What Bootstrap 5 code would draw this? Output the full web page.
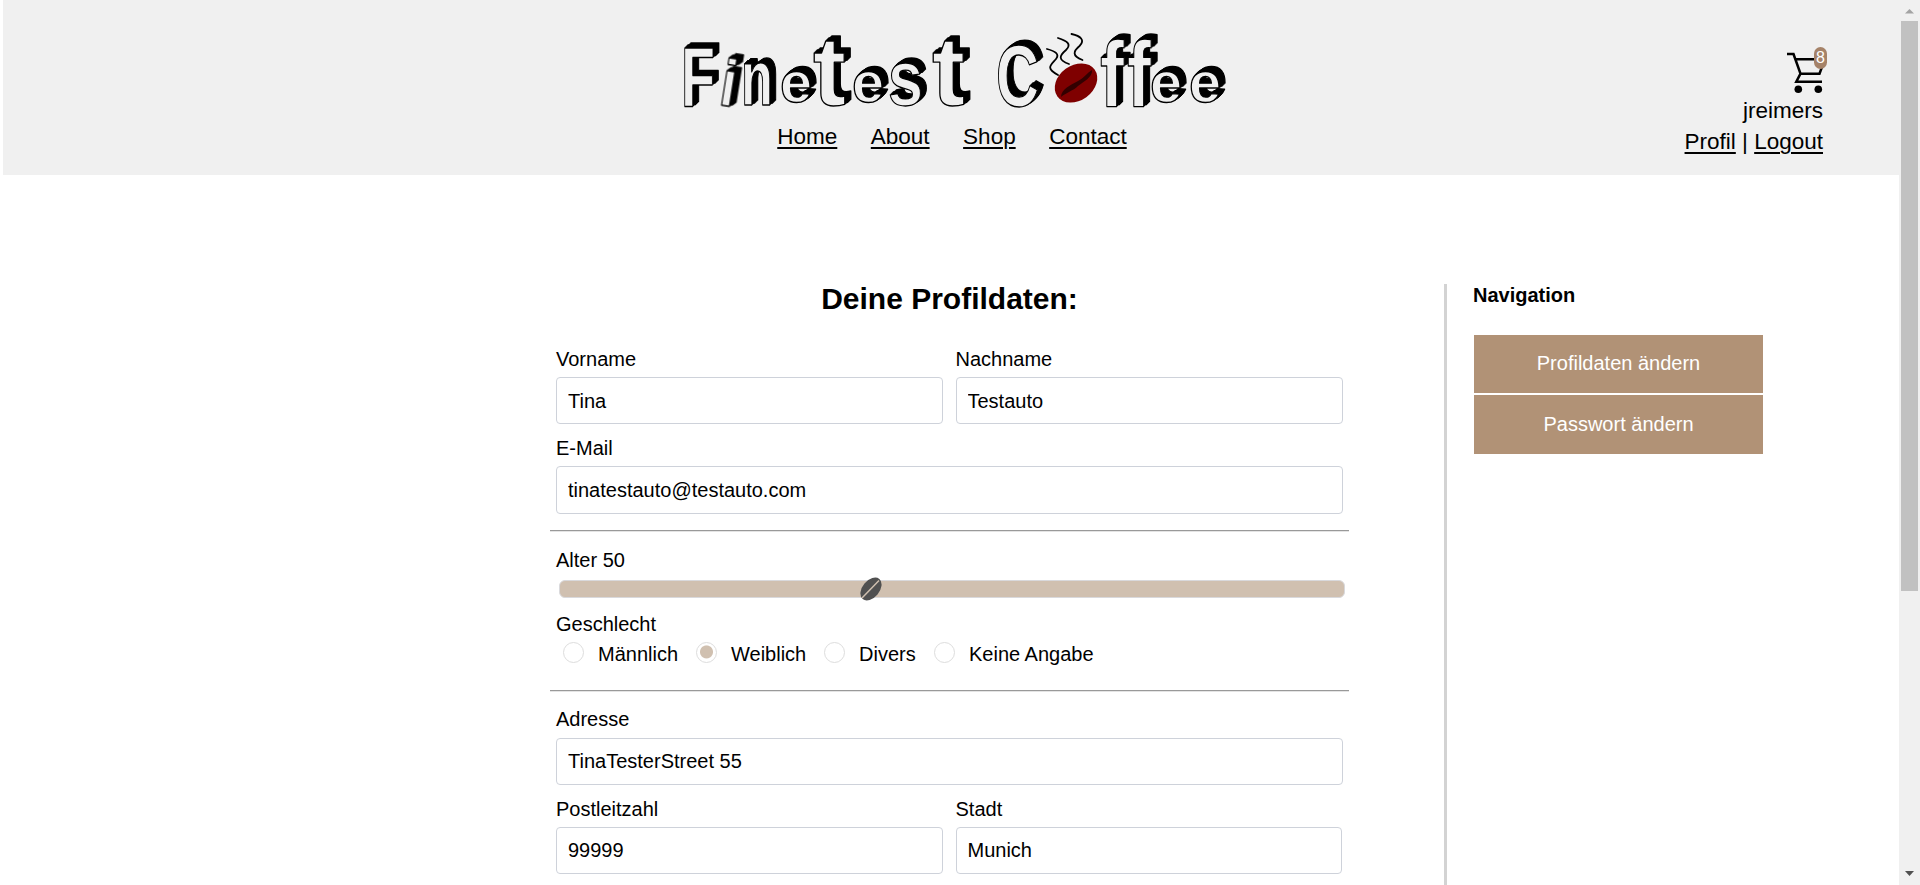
<!DOCTYPE html>
<html lang="de">
<head>
<meta charset="utf-8">
<meta name="viewport" content="width=device-width, initial-scale=1">
<title>Finetest Coffee</title>
<link href="https://cdn.jsdelivr.net/npm/bootstrap@5.3.0/dist/css/bootstrap.min.css" rel="stylesheet">
<style>
body{font-family:"Liberation Sans",Arial,sans-serif;font-size:20px;line-height:24px;color:#000;height:885px;overflow:hidden;background:#fff}
a{color:#000}
.viewport{width:1899px;height:885px;overflow:hidden;padding-left:3px}
.site-head{height:175px;background:#f0f0f0;font-size:22.5px;line-height:31px;display:grid;grid-template-columns:1fr 560px 1fr}
.brand-col{padding-top:24px;position:relative;left:2px}
.logo{display:block;width:560px;height:96px;overflow:visible}
.logo text{fill:#f0f0f0;stroke:#000;stroke-width:1.3px;stroke-linejoin:round;font-family:"Liberation Sans",Arial,sans-serif;font-weight:700;filter:drop-shadow(1px -1px 0 #000) drop-shadow(2px -2px 0 #000) drop-shadow(3px -2px 0 #000)}
.main-links{gap:33.5px;margin:1px 2px 0 0}
.main-links a,.account a{text-decoration-thickness:2px;text-underline-offset:3px}
.account{padding:46px 76px 0 0}
.cart{width:40px;height:49px;margin-right:-4px;position:relative}
.cart-count{position:absolute;left:27px;top:1px;width:13px;height:22px;border-radius:6.5px;background:#a58268;color:#fff;font-size:16px;line-height:22px;text-align:center}
.content{padding-left:547px;padding-top:109px}
.profile{width:799px}
.profile h1{font-size:30px;line-height:34px;font-weight:700;margin:-2px 0 31px}
.field{padding:0 6px 12px}
.field label{display:block;margin-bottom:6px}
.field .form-control{height:47.4px;padding:1px 11px 0;font-size:20px;line-height:24px;color:#000;border-color:#ced2da;border-radius:4px}
.field.col-6:nth-child(odd),.field.col-6.zip{padding-right:7px}
.rule{height:2px;background:linear-gradient(#999 50%,#e4e4e4 50%)}
.track{height:18px;margin:0 -2px 0 3px;border:1px solid #d9d9dc;border-radius:6px;background:#d0c0b0;position:relative}
.bean-thumb{position:absolute;top:-4px;width:24px;height:24px}
.gender{height:24px;margin-top:6px}
.gender .form-check-input{width:21px;height:21px;margin:0 14px 2px 0;border:1px solid #ddd;background-color:#fff;float:none}
.gender .form-check-input:checked{background-image:radial-gradient(circle at 50% 47%,#d0c0b0 6px,#fff 7px)}
.side{margin-left:95px;border-left:3px solid #d3d3d3;padding-left:27px;height:620px;width:320px}
.side h2{font-size:20px;line-height:24px;font-weight:700;margin:-1px 0 28px -1px}
.side .btn{display:block;width:289px;height:58px;background:#b19276;color:#fff;border:0;border-radius:0;font-size:20px;line-height:24px;padding:0 0 3px;margin-bottom:2px}
.side .btn + .btn{height:59px;padding-bottom:2px}
.scroller{width:21px;height:885px;background:#f0f0f0;padding:0 2px}
.scroller svg{display:block;flex:none}
.scroll-thumb{width:17px;height:570px;background:#c1c1c1}
</style>
</head>
<body class="d-flex">
<div class="viewport">
<header class="site-head">
  <div></div>
  <div class="brand-col">
    <svg class="logo" viewBox="672 24 560 96" role="img" aria-label="Finetest Coffee">
      <text x="680" y="107" font-size="86" textLength="34" lengthAdjust="spacingAndGlyphs">F</text>
      <text x="719" y="106" font-size="66" textLength="16" lengthAdjust="spacingAndGlyphs" transform="rotate(9 727 90)">i</text>
      <text x="740" y="105" font-size="78" textLength="32" lengthAdjust="spacingAndGlyphs">n</text>
      <text x="779" y="102" font-size="58" textLength="32" lengthAdjust="spacingAndGlyphs">e</text>
      <text x="812" y="105" font-size="98" textLength="33" lengthAdjust="spacingAndGlyphs">t</text>
      <text x="851" y="102" font-size="58" textLength="32" lengthAdjust="spacingAndGlyphs">e</text>
      <text x="887" y="105" font-size="78" textLength="35" lengthAdjust="spacingAndGlyphs">s</text>
      <text x="931" y="105" font-size="98" textLength="33" lengthAdjust="spacingAndGlyphs">t</text>
      <text x="995" y="106" font-size="88" textLength="43" lengthAdjust="spacingAndGlyphs">C</text>
      <text x="1099" y="106" font-size="92" textLength="24" lengthAdjust="spacingAndGlyphs">f</text>
      <text x="1126" y="106" font-size="92" textLength="24" lengthAdjust="spacingAndGlyphs">f</text>
      <text x="1149" y="102" font-size="58" textLength="32" lengthAdjust="spacingAndGlyphs">e</text>
      <text x="1188" y="102" font-size="58" textLength="32" lengthAdjust="spacingAndGlyphs">e</text>
      <g fill="none" stroke="#000" stroke-width="1.8" stroke-linecap="round">
        <path d="M1046 49c8 2 13 5 9 10-5 6-11 9 2 16"/>
        <path d="M1057 38c9 3 14 6 8 12-7 6-8 10 3 14"/>
        <path d="M1070.500 34c9 2 14 6 8 12-6 5-8 10 3 14"/>
      </g>
      <ellipse cx="1075" cy="83" rx="23" ry="17.500" fill="#7f0000" transform="rotate(-36 1075 83)"/>
      <path d="M1060 97c0-8 10-12 17-16 6-3 9-8 14-11 1 7-9 12-14 16-5 5-11 6-17 11z" fill="#330000"/>
    </svg>
    <nav class="main-links d-flex justify-content-center"><a href="#">Home</a><a href="#">About</a><a href="#">Shop</a><a href="#">Contact</a></nav>
  </div>
  <div class="account d-flex flex-column align-items-end">
    <div class="cart">
      <svg width="40" height="49" viewBox="1787 46 40 49" fill="none" stroke="#000" stroke-width="2.500"><path d="M1787 54h6.500l7 19.700h19l4-11M1796 59.300h27M1800.500 73.700l-4.200 8h25.700"/><g fill="#000" stroke="none"><circle cx="1798.300" cy="89.300" r="3.800"/><circle cx="1818.300" cy="89.300" r="3.800"/></g></svg>
      <span class="cart-count">8</span>
    </div>
    <span>jreimers</span>
    <span><a href="#">Profil</a> | <a href="#">Logout</a></span>
  </div>
</header>
<main class="content d-flex">
  <form class="profile">
    <h1 class="text-center">Deine Profildaten:</h1>
    <div class="row g-0">
      <div class="field col-6"><label for="vn">Vorname</label><input id="vn" class="form-control" value="Tina"></div>
      <div class="field col-6"><label for="nn">Nachname</label><input id="nn" class="form-control" value="Testauto"></div>
      <div class="field col-12"><label for="em">E-Mail</label><input id="em" class="form-control" value="tinatestauto@testauto.com"></div>
    </div>
    <div class="rule" style="margin-top:4px"></div>
    <div class="field col-12" style="padding-top:16px">
      <label style="margin-bottom:8px">Alter 50</label>
      <div class="track"><svg class="bean-thumb" style="left:38.100%" viewBox="0 0 24 24"><ellipse cx="12" cy="12" rx="13" ry="8.500" transform="rotate(-50 12 12)" fill="#505050"/><path d="M3 21L20 3.500" fill="none" stroke="#d0c0b0" stroke-width="1.500"/></svg></div>
      <div style="margin-top:14px">Geschlecht</div>
      <div class="gender d-flex align-items-center">
        <label class="d-flex align-items-center mb-0" style="width:133px;padding-left:7px"><input type="radio" name="g" class="form-check-input">Männlich</label>
        <label class="d-flex align-items-center mb-0" style="width:128px;padding-left:7px"><input type="radio" name="g" class="form-check-input" checked>Weiblich</label>
        <label class="d-flex align-items-center mb-0" style="width:110px;padding-left:7px"><input type="radio" name="g" class="form-check-input">Divers</label>
        <label class="d-flex align-items-center mb-0" style="padding-left:7px"><input type="radio" name="g" class="form-check-input">Keine Angabe</label>
      </div>
    </div>
    <div class="rule" style="margin-top:12px"></div>
    <div class="row g-0" style="padding-top:15px">
      <div class="field col-12"><label for="ad" style="margin-bottom:7px">Adresse</label><input id="ad" class="form-control" style="height:47px" value="TinaTesterStreet 55"></div>
      <div class="field col-6 zip"><label for="pl">Postleitzahl</label><input id="pl" class="form-control" style="height:47px" value="99999"></div>
      <div class="field col-6"><label for="st">Stadt</label><input id="st" class="form-control" style="height:47px" value="Munich"></div>
    </div>
  </form>
  <aside class="side">
    <h2>Navigation</h2>
    <button class="btn" type="button">Profildaten ändern</button>
    <button class="btn" type="button">Passwort ändern</button>
  </aside>
</main>
</div>
<div class="scroller d-flex flex-column">
  <svg width="17" height="21" viewBox="0 0 17 21"><path d="M4 13.500L8.500 9l4.500 4.500z" fill="#a3a3a3"/></svg>
  <div class="scroll-thumb"></div>
  <svg class="mt-auto" width="17" height="20" viewBox="0 0 17 20"><path d="M4 6h9l-4.500 5z" fill="#505050"/></svg>
</div>
<script src="https://cdn.jsdelivr.net/npm/bootstrap@5.3.0/dist/js/bootstrap.bundle.min.js"></script>
</body>
</html>
